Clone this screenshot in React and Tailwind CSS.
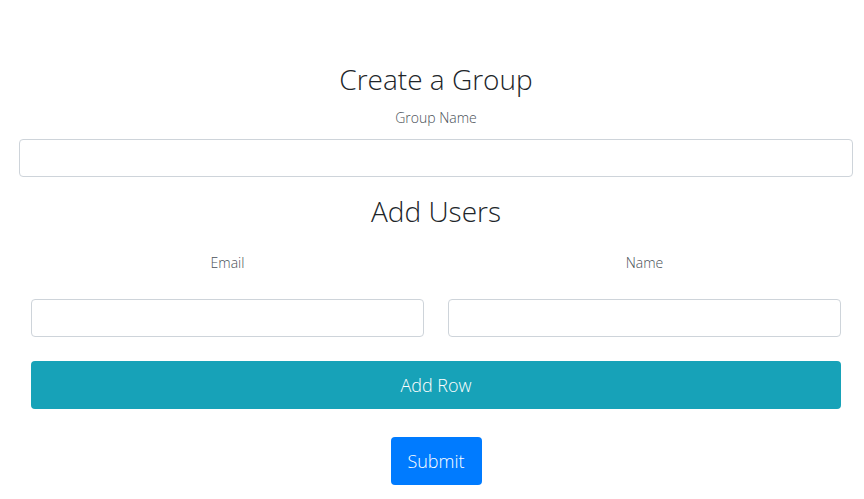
export default function App() {
    return (
        <div className="min-h-[499px] bg-white pl-[19px] pr-[11px] pt-[58px] text-[#212529]" style={{ fontFamily: '"Open Sans", "Noto Sans", sans-serif' }}>
            <h1 className="text-center text-[28px] font-light leading-[42px]">Create a Group</h1>
            <div className="mt-[8px] text-center text-[14px] font-light leading-[20px] text-[#495057]">Group Name</div>
            <input type="text" className="mt-[11px] block h-[38px] w-full rounded border border-[#ced4da] px-3" />
            <h2 className="mt-[13px] text-center text-[28px] font-light leading-[42px]">Add Users</h2>

            <div className="mx-[12px] mt-[21px] grid grid-cols-2 gap-[24px]">
                <div className="flex flex-col">
                    <div className="text-center text-[14px] font-light leading-[20px] text-[#495057]">Email</div>
                    <input type="text" className="mt-[26px] h-[38px] w-full rounded border border-[#ced4da] px-3" />
                </div>
                <div className="flex flex-col">
                    <div className="text-center text-[14px] font-light leading-[20px] text-[#495057]">Name</div>
                    <input type="text" className="mt-[26px] h-[38px] w-full rounded border border-[#ced4da] px-3" />
                </div>
            </div>

            <div className="mx-[12px] mt-[24px]">
                <button className="h-[48px] w-full rounded bg-[#17a2b8] text-[18px] font-light text-white">
                    Add Row
                </button>
            </div>

            <div className="mt-[28px] flex justify-center">
                <button className="h-[48px] w-[91px] rounded bg-[#007bff] text-[18px] font-light text-white">
                    Submit
                </button>
            </div>
        </div>
    );
}
